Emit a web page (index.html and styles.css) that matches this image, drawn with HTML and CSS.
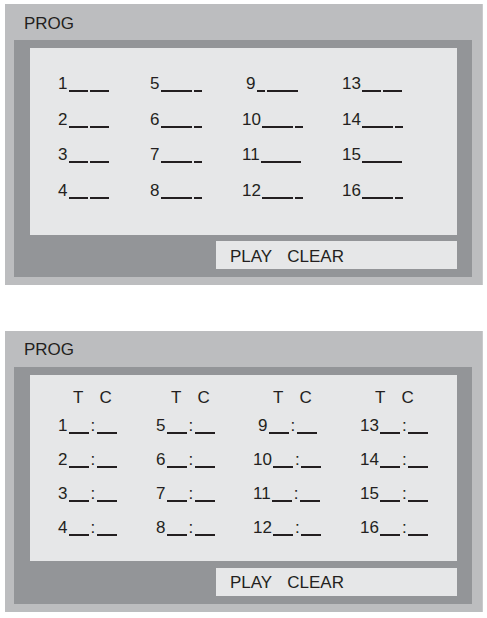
FILE: index.html
```html
<!DOCTYPE html>
<html>
<head>
<meta charset="utf-8">
<link rel="stylesheet" href="styles.css">
</head>
<body>

<!-- Program list, plain -->
<div class="panel first">
  <div class="title">PROG</div>
  <div class="screen">
    <div class="list">
      <div class="grid plain">
        <span>1<span class="u half"></span><span class="u half"></span></span>
        <span>5<span class="u long"></span><span class="u short"></span></span>
        <span class="shift">9<span class="u short"></span><span class="u long"></span></span>
        <span>13<span class="u half"></span><span class="u half"></span></span>

        <span>2<span class="u half"></span><span class="u half"></span></span>
        <span>6<span class="u long"></span><span class="u short"></span></span>
        <span>10<span class="u long"></span><span class="u short"></span></span>
        <span>14<span class="u long"></span><span class="u short"></span></span>

        <span>3<span class="u half"></span><span class="u half"></span></span>
        <span>7<span class="u long"></span><span class="u short"></span></span>
        <span>11<span class="u full"></span></span>
        <span>15<span class="u full"></span></span>

        <span>4<span class="u half"></span><span class="u half"></span></span>
        <span>8<span class="u long"></span><span class="u short"></span></span>
        <span>12<span class="u long"></span><span class="u short"></span></span>
        <span>16<span class="u long"></span><span class="u short"></span></span>
      </div>
    </div>
    <div class="bar"><span>PLAY</span><span>CLEAR</span></div>
  </div>
</div>

<!-- Program list, title / chapter -->
<div class="panel second">
  <div class="title">PROG</div>
  <div class="screen">
    <div class="list">
      <div class="grid tc">
        <div class="head"><span>T</span><span>C</span></div>
        <div class="head"><span>T</span><span>C</span></div>
        <div class="head shift"><span>T</span><span>C</span></div>
        <div class="head"><span>T</span><span>C</span></div>

        <span>1<span class="u"></span>:<span class="u"></span></span>
        <span>5<span class="u"></span>:<span class="u"></span></span>
        <span class="shift">9<span class="u"></span>:<span class="u"></span></span>
        <span>13<span class="u"></span>:<span class="u"></span></span>

        <span>2<span class="u"></span>:<span class="u"></span></span>
        <span>6<span class="u"></span>:<span class="u"></span></span>
        <span>10<span class="u"></span>:<span class="u"></span></span>
        <span>14<span class="u"></span>:<span class="u"></span></span>

        <span>3<span class="u"></span>:<span class="u"></span></span>
        <span>7<span class="u"></span>:<span class="u"></span></span>
        <span>11<span class="u"></span>:<span class="u"></span></span>
        <span>15<span class="u"></span>:<span class="u"></span></span>

        <span>4<span class="u"></span>:<span class="u"></span></span>
        <span>8<span class="u"></span>:<span class="u"></span></span>
        <span>12<span class="u"></span>:<span class="u"></span></span>
        <span>16<span class="u"></span>:<span class="u"></span></span>
      </div>
    </div>
    <div class="bar"><span>PLAY</span><span>CLEAR</span></div>
  </div>
</div>

</body>
</html>
```
FILE: styles.css
```css
body {
  margin: 0;
  background-color: #ffffff;
  font-family: "Liberation Sans", Arial, sans-serif;
  font-size: 17px;
  color: #231f20;
}

/* Outer grey frame */
.panel {
  width: 478px;
  margin-left: 5px;
  box-sizing: border-box;
  padding: 0 10px 8px 9px;
  background-color: #bcbdbf;
  border-right: 1px solid #c9cacc;
}

.panel.first {
  margin-top: 4px;
}

.panel.second {
  margin-top: 46px;
}

.title {
  height: 36px;
  box-sizing: border-box;
  padding: 4px 0 0 10px;
  line-height: 32px;
}

.panel.second .title {
  padding-top: 3px;
}

/* Dark screen */
.screen {
  background-color: #939598;
  padding: 8px 15px 8px 16px;
}

.list {
  background-color: #e6e7e8;
  height: 187px;
  box-sizing: border-box;
  padding-left: 28px;
}

.panel.second .list {
  height: 186px;
}

.grid {
  display: grid;
  white-space: nowrap;
}

.grid.plain {
  padding-top: 18px;
  grid-template-columns: 92px 92px 100px 1fr;
  line-height: 35.5px;
}

.grid.tc {
  padding-top: 12px;
  grid-template-columns: 98px 97px 107px 1fr;
  line-height: 34px;
}

.grid .shift {
  padding-left: 4px;
}

.grid.tc .shift {
  padding-left: 5px;
}

/* blank lines to fill in */
.u {
  display: inline-block;
  width: 20px;
  height: 0;
  border-bottom: 2px solid #231f20;
  vertical-align: -3px;
  margin: 0 1.5px;
}

.grid.plain .u {
  margin: 0 0 0 2px;
}

.grid.plain .u:first-child {
  margin-left: 1.5px;
}

.u.half {
  width: 19px;
}

.u.long {
  width: 31px;
}

.u.short {
  width: 8px;
}

.u.full {
  width: 40px;
}

.head {
  display: flex;
  gap: 16px;
  line-height: 22px;
  padding-left: 15px;
}

.grid.tc .head.shift {
  padding-left: 20px;
}

/* PLAY / CLEAR strip */
.bar {
  width: 241px;
  height: 28px;
  margin: 6px 0 0 auto;
  box-sizing: border-box;
  padding: 3px 0 0 14px;
  line-height: 25px;
  background-color: #e6e7e8;
  display: flex;
  gap: 15px;
}

.panel.second .bar {
  margin-top: 7px;
  height: 28px;
  padding-top: 2px;
}
```
